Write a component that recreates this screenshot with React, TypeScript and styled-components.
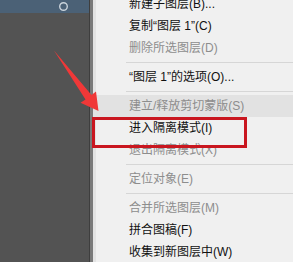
import React from "react";
import styled, { createGlobalStyle } from "styled-components";

const GlobalStyle = createGlobalStyle`
  html, body {
    margin: 0;
    padding: 0;
    background: #f0f0f0;
  }
`;

type Entry =
  | { kind: "item"; label: string; disabled?: boolean; hover?: boolean }
  | { kind: "sep" };

const entries: Entry[] = [
  { kind: "item", label: "新建子图层(B)..." },
  { kind: "item", label: "复制“图层 1”(C)" },
  { kind: "item", label: "删除所选图层(D)", disabled: true },
  { kind: "sep" },
  { kind: "item", label: "“图层 1”的选项(O)..." },
  { kind: "sep" },
  { kind: "item", label: "建立/释放剪切蒙版(S)", disabled: true, hover: true },
  { kind: "item", label: "进入隔离模式(I)" },
  { kind: "item", label: "退出隔离模式(X)", disabled: true },
  { kind: "sep" },
  { kind: "item", label: "定位对象(E)", disabled: true },
  { kind: "sep" },
  { kind: "item", label: "合并所选图层(M)", disabled: true },
  { kind: "item", label: "拼合图稿(F)" },
  { kind: "item", label: "收集到新图层中(W)" },
];

export default function App() {
  return (
    <>
      <GlobalStyle />
      <Page>
        <LayersPanel>
          <PanelHeader>
            <RingIcon />
          </PanelHeader>
          <PanelBody />
        </LayersPanel>
        <PanelEdge />
        <Menu>
          <MenuList>
            {entries.map((e, i) =>
              e.kind === "sep" ? (
                <Separator key={i} />
              ) : (
                <MenuItem key={i} $disabled={e.disabled} $hover={e.hover}>
                  {e.label}
                </MenuItem>
              )
            )}
          </MenuList>
        </Menu>
        <Highlight />
        <Arrow viewBox="0 0 293 262">
          <path d="M54 50.5 L91.5 95 L96 91.5 L98.5 111 L80.5 102.8 L85.5 99.5 Z" />
        </Arrow>
      </Page>
    </>
  );
}

const RingIcon = () => (
  <svg width="11" height="11" viewBox="0 0 11 11">
    <circle cx="5.5" cy="5.5" r="3.8" fill="none" stroke="#c9d2da" strokeWidth="1.4" />
  </svg>
);

/*
 * STYLES --------------------------------------------------------------
 */

const Page = styled.div`
  position: relative;
  display: flex;
  width: 293px;
  height: 262px;
  overflow: hidden;
  font-family: "Liberation Sans", "Noto Sans CJK SC", sans-serif;
`;

const LayersPanel = styled.div`
  display: flex;
  flex-direction: column;
  width: 89px;
  flex-shrink: 0;
  border-right: 1px solid #3e3e3e;
`;

const PanelHeader = styled.div`
  height: 13px;
  background: #4b6176;
  display: flex;
  align-items: center;
  padding-left: 58px;
`;

const PanelBody = styled.div`
  flex: 1;
  background: #535353;
`;

const PanelEdge = styled.div`
  width: 3px;
  flex-shrink: 0;
  background: #7a7a7a;
  border-right: 3px solid #e3e3e3;
`;

const Menu = styled.div`
  flex: 1;
  background: #f0f0f0;
  overflow: hidden;
`;

const MenuList = styled.div`
  display: flex;
  flex-direction: column;
  margin-top: -7px;
`;

const MenuItem = styled.div<{ $disabled?: boolean; $hover?: boolean }>`
  height: 22px;
  line-height: 22px;
  padding-left: 33px;
  font-size: 12px;
  white-space: nowrap;
  color: ${(p) => (p.$disabled ? "#8d8d8d" : "#111")};
  background: ${(p) => (p.$hover ? "#e2e2e2" : "transparent")};
`;

const Separator = styled.div`
  height: 7px;
  display: flex;
  align-items: center;
  margin-left: 30px;

  &::after {
    content: "";
    flex: 1;
    height: 1px;
    background: #d6d6d6;
  }
`;

const Highlight = styled.div`
  position: absolute;
  left: 92px;
  top: 117px;
  width: 155px;
  height: 31px;
  box-sizing: border-box;
  border: 3px solid #c9161f;
`;

const Arrow = styled.svg`
  position: absolute;
  left: 0;
  top: 0;
  width: 293px;
  height: 262px;
  fill: #f03838;
  pointer-events: none;
`;
